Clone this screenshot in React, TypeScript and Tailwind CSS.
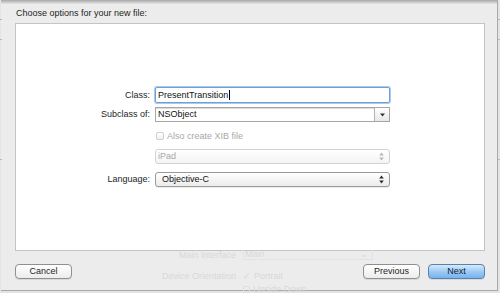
const font = "font-['Liberation_Sans',Arial,sans-serif]";

function UpDown({ dim }: { dim?: boolean }) {
  return (
    <svg width="5" height="9" viewBox="0 0 5 9" className={dim ? 'fill-[#b5b5b5]' : 'fill-[#2a2a2a]'}>
      <path d="M2.5 0.5 L4.8 3.6 L0.2 3.6 Z" />
      <path d="M0.2 5.4 L4.8 5.4 L2.5 8.5 Z" />
    </svg>
  );
}

function Label({ children }: { children: React.ReactNode }) {
  return <div className="w-[139px] pr-[5px] text-right text-[#1e1e1e]">{children}</div>;
}

function Button({ label, primary }: { label: string; primary?: boolean }) {
  return (
    <div
      className={
        primary
          ? 'flex h-[15px] w-[57px] items-center justify-center rounded-[4px] border border-[#5b80b0] bg-linear-to-b from-[#d7eafb] via-[#9ccbf3] to-[#74b4ee] text-[#10223a] shadow-[0_1px_0_rgba(0,0,0,0.08)]'
          : 'flex h-[15px] w-[57px] items-center justify-center rounded-[4px] border border-[#8f8f8f] bg-linear-to-b from-white to-[#ececec] text-[#1e1e1e] shadow-[0_1px_0_rgba(0,0,0,0.08)]'
      }
    >
      {label}
    </div>
  );
}

export default function App() {
  return (
    <div className={`${font} relative h-[293px] w-[500px] overflow-hidden bg-[#e4e4e4] text-[9px] leading-none`}>
      {/* faint marks from the window behind */}
      <div className="absolute left-0 top-[19px] h-px w-[2px] bg-[#b8b8b8]" />
      <div className="absolute left-0 top-[39px] h-px w-[2px] bg-[#b8b8b8]" />
      <div className="absolute left-0 top-[159px] h-px w-[2px] bg-[#b8b8b8]" />
      <div className="absolute right-0 top-[19px] h-px w-[2px] bg-[#b8b8b8]" />
      <div className="absolute right-0 top-[39px] h-px w-[2px] bg-[#b8b8b8]" />
      <div className="absolute right-0 top-[159px] h-px w-[2px] bg-[#b8b8b8]" />

      <div className="ml-[1px] flex h-[291px] w-[497px] flex-col border-r border-b border-[#a9a9a9] bg-[#ececec]">
        <div className="h-[4px] bg-linear-to-b from-[#a8a8a8] to-[#e6e6e6]" />

        <div className="flex h-[19px] items-center pl-[15px] pb-[1px] text-[#1e1e1e]">Choose options for your new file:</div>

        <div className="ml-[14px] flex h-[228px] w-[470px] flex-col justify-center border border-[#c4c4c4] bg-white">
          <div className="flex items-center">
            <Label>Class:</Label>
            <div className="flex h-[16px] w-[235px] items-center rounded-[2px] border border-[#6f9fd6] pl-[2px] shadow-[0_0_0_1px_#a9c9ee]">
              <span className="text-[#111]">PresentTransition</span>
              <span className="ml-px h-[10px] w-px bg-black" />
            </div>
          </div>

          <div className="mt-[4px] flex items-center">
            <Label>Subclass of:</Label>
            <div className="flex h-[15px] w-[235px] items-center border border-[#a6a6a6] shadow-[inset_0_1px_0_#dcdcdc]">
              <div className="flex-1 pl-[2px] text-[#111]">NSObject</div>
              <div className="flex h-full w-[15px] items-center justify-center border-l border-[#b4b4b4] bg-linear-to-b from-white to-[#e8e8e8]">
                <svg width="5" height="4" viewBox="0 0 5 4" className="fill-[#333]">
                  <path d="M0 0.5 L5 0.5 L2.5 3.5 Z" />
                </svg>
              </div>
            </div>
          </div>

          <div className="mt-[8px] flex h-[12px] items-center">
            <div className="w-[139px]" />
            <div className="ml-px h-[8px] w-[8px] rounded-[2px] border border-[#cfcfcf] bg-linear-to-b from-white to-[#f0f0f0]" />
            <span className="ml-[3px] text-[#a8a8a8]">Also create XIB file</span>
          </div>

          <div className="mt-[7px] flex items-center">
            <div className="w-[139px]" />
            <div className="flex h-[15px] w-[235px] items-center justify-between rounded-[3px] border border-[#d2d2d2] bg-linear-to-b from-white to-[#f4f4f4] pl-[2px] pr-[5px]">
              <span className="text-[#a8a8a8]">iPad</span>
              <UpDown dim />
            </div>
          </div>

          <div className="mt-[8px] flex items-center">
            <Label>Language:</Label>
            <div className="flex h-[15px] w-[235px] items-center justify-between rounded-[3px] border border-[#9a9a9a] bg-linear-to-b from-white to-[#ebebeb] pl-[6px] pr-[5px] shadow-[0_1px_0_rgba(0,0,0,0.08)]">
              <span className="text-[#111]">Objective-C</span>
              <UpDown />
            </div>
          </div>
        </div>

        <div className="relative flex flex-1 items-center pl-[14px] pr-[12px] pt-[1px]">
          {/* ghost of the sheet underneath */}
          <div className="absolute left-[160px] top-[-1px] whitespace-nowrap text-[#d8d8d8]">
            <div className="flex h-[10px] items-center">
              <span className="w-[75px] text-right">Main Interface</span>
              <span className="ml-[7px] flex h-[10px] w-[130px] items-center justify-between border-x border-b border-[#e2e2e2] pl-[1px] pr-[4px]">
                <span>Main</span>
                <span>⌄</span>
              </span>
            </div>
            <div className="mt-[11px] flex h-[10px] items-center">
              <span className="w-[75px] text-right">Device Orientation</span>
              <span className="ml-[7px]">✓</span>
              <span className="ml-[3px]">Portrait</span>
            </div>
            <div className="mt-[3px] flex h-[10px] items-center">
              <span className="w-[75px]" />
              <span className="ml-[7px] h-[7px] w-[7px] rounded-[1px] border border-[#dedede]" />
              <span className="ml-[3px]">Upside Down</span>
            </div>
          </div>

          <div className="relative flex w-full items-center">
            <Button label="Cancel" />
            <div className="flex-1" />
            <Button label="Previous" />
            <div className="ml-[8px]">
              <Button label="Next" primary />
            </div>
          </div>
        </div>
      </div>
    </div>
  );
}
